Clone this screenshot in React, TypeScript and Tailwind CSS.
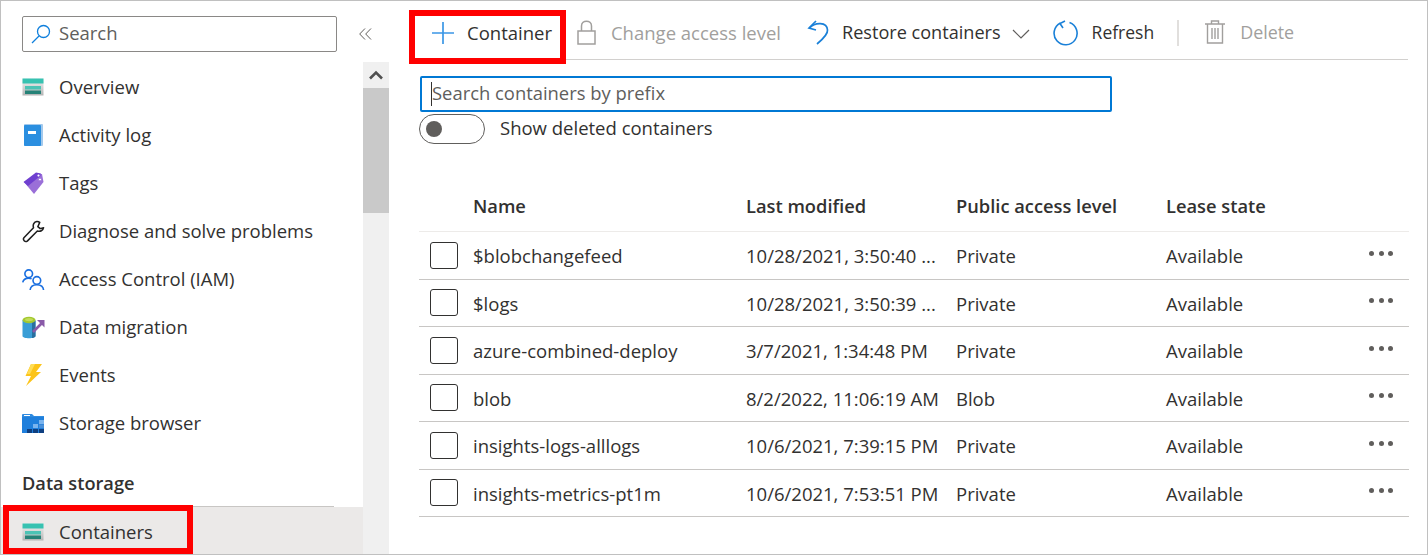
import React from "react";

const F = "font-['Open_Sans','Noto_Sans',sans-serif]";

function Storage() {
  return (
    <svg width="22" height="18" viewBox="0 0 22 18">
      <defs>
        <linearGradient id="sg" x1="0" y1="0" x2="0" y2="1">
          <stop offset="0" stopColor="#f4f4f4" />
          <stop offset="1" stopColor="#b4b4b4" />
        </linearGradient>
      </defs>
      <rect x="0.5" y="0.5" width="21" height="17" fill="url(#sg)" />
      <rect x="0.5" y="0.5" width="21" height="5" fill="#37c2b1" />
      <rect x="3" y="8" width="16" height="3.5" fill="#4cc3b5" />
      <rect x="3" y="12.5" width="16" height="3.5" fill="#258277" />
    </svg>
  );
}
function Book() {
  return (
    <svg className="ml-[2px]" width="19" height="22" viewBox="0 0 19 22">
      <rect x="0" y="0" width="19" height="22" rx="1" fill="#a3c9ec" />
      <rect x="0" y="1" width="17" height="21" rx="1" fill="#2b8fe0" />
      <rect x="4" y="7" width="8" height="3" fill="#ffffff" />
    </svg>
  );
}
function Tag() {
  return (
    <svg className="ml-[1px]" width="21" height="23" viewBox="0 0 21 23">
      <path d="M1 10 L13 2 L19 2 L20.5 10 L11 22 Z" fill="#9a6fd8" />
      <path d="M0.5 10 L13 0.5 L18 1.5 L16 5 L5 14 Z" fill="#6f3fd0" />
      <circle cx="15.5" cy="3.5" r="1.5" fill="#fff" stroke="#6f3fd0" />
      <circle cx="17" cy="7.5" r="1.5" fill="#fff" stroke="#9a6fd8" />
    </svg>
  );
}
function Wrench() {
  return (
    <svg width="23" height="23" viewBox="0 0 24 24" fill="none" stroke="#1f1f1f" strokeWidth="1.6" strokeLinejoin="round">
      <path d="M15.5 1.5 C12.5 2 11 5 12 8 L2 18.5 C0.5 20.5 3 23.5 5.5 22 L16 11.5 C19 12.5 22 11 22.5 8 L19 9 L16.5 7 L18.5 2.5 C17.5 1.7 16.5 1.4 15.5 1.5 Z" />
    </svg>
  );
}
function People() {
  return (
    <svg width="23" height="23" viewBox="0 0 24 24" fill="none" stroke="#1a6fe0" strokeWidth="1.7">
      <circle cx="7" cy="6" r="4" />
      <path d="M0.8 15 C1.5 11.5 4 10.5 7 10.5 C8 10.5 9 10.7 10 11.1" />
      <circle cx="15.5" cy="13" r="4" />
      <path d="M8.5 23 C8.8 19.5 11.5 17.5 15.5 17.5 C19.5 17.5 22.2 19.5 22.5 23" />
    </svg>
  );
}
function Migration() {
  return (
    <svg width="23" height="23" viewBox="0 0 23 23">
      <path d="M0.5 4 V20 C0.5 23 13.5 23 13.5 20 V4 Z" fill="#3a9ed6" />
      <path d="M10 5 H13.5 V20 C13.5 21 12 21.6 10 22 Z" fill="#2a6f9e" />
      <ellipse cx="7" cy="4" rx="6.5" ry="3.2" fill="#a3c82e" />
      <ellipse cx="7" cy="3.6" rx="4" ry="1.6" fill="#c2dc5a" />
      <path d="M11 16 L20 7" stroke="#8a5aa8" strokeWidth="2.6" fill="none" />
      <path d="M15 4 H22.5 V11.5 Z" fill="#8a5aa8" />
    </svg>
  );
}
function Bolt() {
  return (
    <svg className="ml-[3px]" width="17" height="22" viewBox="0 0 17 22">
      <path d="M6 0 H17 L11 8 H16 L1 22 L6 12 H0.5 Z" fill="#fcc419" />
      <path d="M6 0 H10 L5 10 H2 Z" fill="#ffdd55" />
    </svg>
  );
}
function Browser() {
  return (
    <svg width="22" height="19" viewBox="0 0 22 19">
      <path d="M0 1 Q0 0 1 0 H10 L12 2 H22 V19 H0 Z" fill="#2f8be0" />
      <rect x="0" y="3" width="22" height="16" fill="#1f7fdc" />
      <rect x="2" y="1" width="6" height="1" fill="#fff" />
      <rect x="17" y="6" width="5" height="4" fill="#7ab4ee" />
      <rect x="11" y="10" width="5" height="4" fill="#7ab4ee" />
      <rect x="17" y="10.5" width="5" height="3.5" fill="#4a90d9" />
      <rect x="5" y="15" width="5" height="4" fill="#0f3f80" />
      <rect x="11" y="15" width="5" height="4" fill="#0f3f80" />
      <rect x="17" y="15" width="5" height="4" fill="#0f3f80" />
    </svg>
  );
}

const nav: [string, React.ReactNode][] = [
  ["Overview", <Storage />],
  ["Activity log", <Book />],
  ["Tags", <Tag />],
  ["Diagnose and solve problems", <Wrench />],
  ["Access Control (IAM)", <People />],
  ["Data migration", <Migration />],
  ["Events", <Bolt />],
  ["Storage browser", <Browser />],
];

const rows = [
  ["$blobchangefeed", "10/28/2021, 3:50:40 ...", "Private"],
  ["$logs", "10/28/2021, 3:50:39 ...", "Private"],
  ["azure-combined-deploy", "3/7/2021, 1:34:48 PM", "Private"],
  ["blob", "8/2/2022, 11:06:19 AM", "Blob"],
  ["insights-logs-alllogs", "10/6/2021, 7:39:15 PM", "Private"],
  ["insights-metrics-pt1m", "10/6/2021, 7:53:51 PM", "Private"],
];

function Sidebar() {
  return (
    <div className="w-[388px] flex flex-col shrink-0 relative">
      <div className="h-[61px] flex items-start pt-[15px] pl-[21px] shrink-0">
        <div className="w-[315px] h-[36px] border border-[#8a8886] rounded-[2px] flex items-center pl-[8px] gap-[8px]">
          <svg width="20" height="20" viewBox="0 0 20 20" fill="none" stroke="#0f7fdc" strokeWidth="1.3">
            <circle cx="12.5" cy="7.5" r="6" />
            <path d="M8 12 L1 19" />
          </svg>
          <span className="text-[18.5px] text-[#605e5c] -mt-[2px]">Search</span>
        </div>
        <svg className="ml-[22px] mt-[12px]" width="13" height="12" viewBox="0 0 13 12" fill="none" stroke="#605e5c" strokeWidth="1">
          <path d="M6 0.5 L0.7 6 L6 11.5 M12 0.5 L6.7 6 L12 11.5" />
        </svg>
      </div>
      <div className="flex flex-1 min-h-0">
        <div className="w-[362px] flex flex-col pt-[1px]">
          <div className="flex flex-col">
            {nav.map(([label, icon]) => (
              <div key={label} className="h-[48px] flex items-center shrink-0">
                <div className="w-[58px] pl-[21px] flex justify-start shrink-0">{icon}</div>
                <span className="text-[18.5px] text-[#323130] whitespace-nowrap">{label}</span>
              </div>
            ))}
          </div>
          <div className="mt-[12px] h-[48px] pl-[21px] flex flex-col shrink-0">
            <div className="flex-1 flex items-center pt-[2px] text-[18.2px] font-semibold text-[#323130]">Data storage</div>
            <div className="h-px w-[312px] bg-[#c8c6c4]" />
          </div>
          <div className="flex-1 bg-[#ebe9e8] flex items-center pt-[3px]">
            <div className="w-[58px] pl-[21px] shrink-0"><Storage /></div>
            <span className="text-[18.5px] text-[#323130]">Containers</span>
          </div>
        </div>
        <div className="w-[26px] bg-[#f0f0f0] flex flex-col shrink-0">
          <div className="h-[26px] flex items-center justify-center">
            <svg width="14" height="10" viewBox="0 0 14 10" fill="none" stroke="#505050" strokeWidth="2.6">
              <path d="M1 8.5 L7 2.5 L13 8.5" />
            </svg>
          </div>
          <div className="h-[125px] bg-[#c9c9c9]" />
        </div>
      </div>
      <div className="absolute left-[2px] top-[504px] w-[190px] h-[49px] border-[6px] border-[#ff0000]" />
    </div>
  );
}

function ToolButton({ icon, label, disabled, className, textClass }: { icon: React.ReactNode; label: string; disabled?: boolean; className?: string; textClass: string }) {
  return (
    <div className={`flex items-center shrink-0 ${className ?? ""}`}>
      {icon}
      <span className={`whitespace-nowrap ${textClass} ${disabled ? "text-[#a19f9d]" : "text-[#323130]"}`}>{label}</span>
    </div>
  );
}

function Toolbar() {
  return (
    <div className="relative h-[59px] border-b border-[#d2d0ce] w-[989px] flex items-center pt-[5px] pl-[12px] shrink-0">
      <ToolButton
        className="gap-[12px]"
        textClass="text-[18.5px]"
        label="Container"
        icon={
          <svg width="24" height="24" viewBox="0 0 24 24" stroke="#3b97e6" strokeWidth="1.7">
            <path d="M12 1 V23 M1 12 H23" />
          </svg>
        }
      />
      <ToolButton
        className="gap-[14px] ml-[25px]"
        textClass="text-[18.5px]"
        disabled
        label="Change access level"
        icon={
          <svg width="20" height="25" viewBox="0 0 20 25" fill="none" stroke="#a19f9d" strokeWidth="1.5">
            <rect x="1" y="11" width="17" height="13" />
            <path d="M4.5 11 V6 C4.5 -0.5 14.5 -0.5 14.5 6 V11" />
          </svg>
        }
      />
      <ToolButton
        className="gap-[11px] ml-[26px]"
        textClass="text-[18.1px]"
        label="Restore containers"
        icon={
          <svg width="24" height="25" viewBox="0 0 24 25" fill="none" stroke="#1a80d8" strokeWidth="1.7">
            <path d="M9 1 L2 8 L9 10" />
            <path d="M2.5 8 C8 2 20 1.5 20.5 10 C21 14 16 19 10 24" />
          </svg>
        }
      />
      <svg className="ml-[11px] mt-[3px]" width="18" height="10" viewBox="0 0 18 10" fill="none" stroke="#605e5c" strokeWidth="1.2">
        <path d="M1 1 L9 9 L17 1" />
      </svg>
      <ToolButton
        className="gap-[13px] ml-[23px]"
        textClass="text-[17.5px]"
        label="Refresh"
        icon={
          <svg width="26" height="26" viewBox="0 0 26 26" fill="none" stroke="#1a80d8" strokeWidth="1.6">
            <path d="M16.5 2.5 A11.5 11.5 0 1 1 7.5 3" />
            <path d="M12 1 L7 3.5 L10 8" />
          </svg>
        }
      />
      <div className="w-[2px] h-[26px] bg-[#e1dfdd] ml-[23px]" />
      <ToolButton
        className="gap-[15px] ml-[26px]"
        textClass="text-[17.9px]"
        disabled
        label="Delete"
        icon={
          <svg width="20" height="24" viewBox="0 0 20 24" fill="none" stroke="#a19f9d" strokeWidth="1.4">
            <path d="M0 4 H20 M6.5 4 V1 H13.5 V4 M2.5 4 V23 H17.5 V4" />
            <path d="M7 8 V19 M10 8 V19 M13 8 V19" />
          </svg>
        }
      />
      <div className="absolute left-[-10px] top-[9px] w-[157px] h-[54px] border-[6px] border-[#ff0000]" />
    </div>
  );
}

function Dots() {
  return (
    <div className="flex gap-[4.5px]">
      <div className="w-[5px] h-[5px] rounded-full bg-[#605e5c]" />
      <div className="w-[5px] h-[5px] rounded-full bg-[#605e5c]" />
      <div className="w-[5px] h-[5px] rounded-full bg-[#605e5c]" />
    </div>
  );
}

function Table() {
  const head = "text-[18.3px] font-semibold text-[#323130] whitespace-nowrap";
  const cell = "text-[18.5px] text-[#323130] whitespace-nowrap pt-[2px]";
  return (
    <div className="w-[990px] mt-[37px]">
      <div className="h-[51px] flex items-center border-b border-[#edebe9]">
        <div className={`w-[327px] pl-[54px] ${head}`}>Name</div>
        <div className={`w-[210px] ${head}`}>Last modified</div>
        <div className={`w-[210px] ${head}`}>Public access level</div>
        <div className={head}>Lease state</div>
      </div>
      {rows.map((r) => (
        <div key={r[0]} className="h-[47.5px] flex items-center border-b border-[#c8c6c4] relative">
          <div className="w-[54px] pl-[11px] shrink-0">
            <div className="w-[28px] h-[27px] border border-[#323130] rounded-[3px]" />
          </div>
          <div className={`w-[273px] ${cell}`}>{r[0]}</div>
          <div className={`w-[210px] ${cell}`}>{r[1]}</div>
          <div className={`w-[210px] ${cell}`}>{r[2]}</div>
          <div className={`w-[203px] ${cell}`}>Available</div>
          <div className="-mt-[4px]"><Dots /></div>
        </div>
      ))}
    </div>
  );
}

export default function App() {
  return (
    <div className={`w-[1428px] h-[555px] bg-white border border-[#c0c0c0] flex overflow-hidden ${F}`}>
      <Sidebar />
      <div className="flex-1 min-w-0 pl-[30px] flex flex-col">
        <Toolbar />
        <div className="mt-[16px] ml-[1px] w-[692px] h-[36px] border-2 border-[#0078d4] rounded-[2px] flex items-center pl-[9px]">
          <div className="w-px h-[24px] bg-[#323130]" />
          <span className="text-[18.4px] -mt-[2px] text-[#605e5c]">Search containers by prefix</span>
        </div>
        <div className="mt-[2px] flex items-center">
          <div className="w-[66px] h-[30px] border border-[#605e5c] rounded-full flex items-center pl-[6px]">
            <div className="w-[16px] h-[16px] rounded-full bg-[#605e5c]" />
          </div>
          <span className="ml-[15px] -mt-[2px] text-[18.5px] text-[#323130]">Show deleted containers</span>
        </div>
        <Table />
      </div>
    </div>
  );
}
